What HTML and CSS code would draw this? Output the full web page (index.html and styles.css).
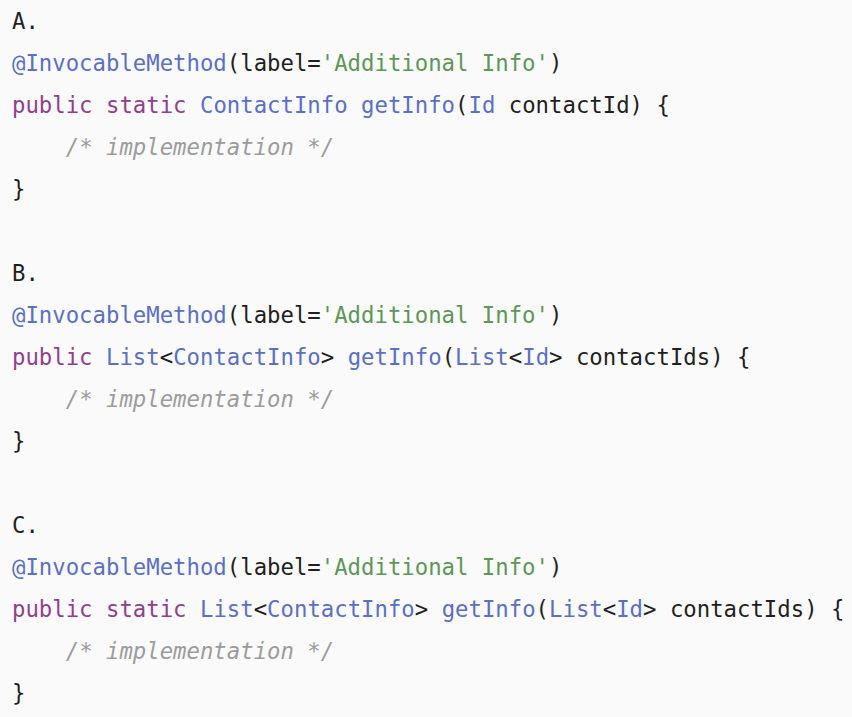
FILE: index.html
```html
<!DOCTYPE html>
<html>
<head>
<meta charset="utf-8">
<link rel="stylesheet" href="styles.css">
</head>
<body>
<pre class="code"><span class="pl">A.</span>
<span class="ty">@InvocableMethod</span>(label=<span class="st">'Additional Info'</span>)
<span class="kw">public</span> <span class="kw">static</span> <span class="ty">ContactInfo</span> <span class="ty">getInfo</span>(<span class="ty">Id</span> contactId) {
    <span class="cm">/* implementation */</span>
}

B.
<span class="ty">@InvocableMethod</span>(label=<span class="st">'Additional Info'</span>)
<span class="kw">public</span> <span class="ty">List</span>&lt;<span class="ty">ContactInfo</span>&gt; <span class="ty">getInfo</span>(<span class="ty">List</span>&lt;<span class="ty">Id</span>&gt; contactIds) {
    <span class="cm">/* implementation */</span>
}

C.
<span class="ty">@InvocableMethod</span>(label=<span class="st">'Additional Info'</span>)
<span class="kw">public</span> <span class="kw">static</span> <span class="ty">List</span>&lt;<span class="ty">ContactInfo</span>&gt; <span class="ty">getInfo</span>(<span class="ty">List</span>&lt;<span class="ty">Id</span>&gt; contactIds) {
    <span class="cm">/* implementation */</span>
}</pre>
</body>
</html>
```
FILE: styles.css
```css
html, body {
  margin: 0;
  padding: 0;
  background: #fafafa;
}
.code {
  margin: 0;
  padding: 0 0 0 12px;
  font-family: "DejaVu Sans Mono", "Liberation Mono", monospace;
  font-size: 22.3px;
  line-height: 42px;
  color: #1f1f1f;
  background: #fafafa;
  white-space: pre;
}
.kw { color: #8f3f8d; }
.ty { color: #5b6fc4; }
.st { color: #5c9658; }
.cm { color: #9c9c9c; font-style: italic; }
```
